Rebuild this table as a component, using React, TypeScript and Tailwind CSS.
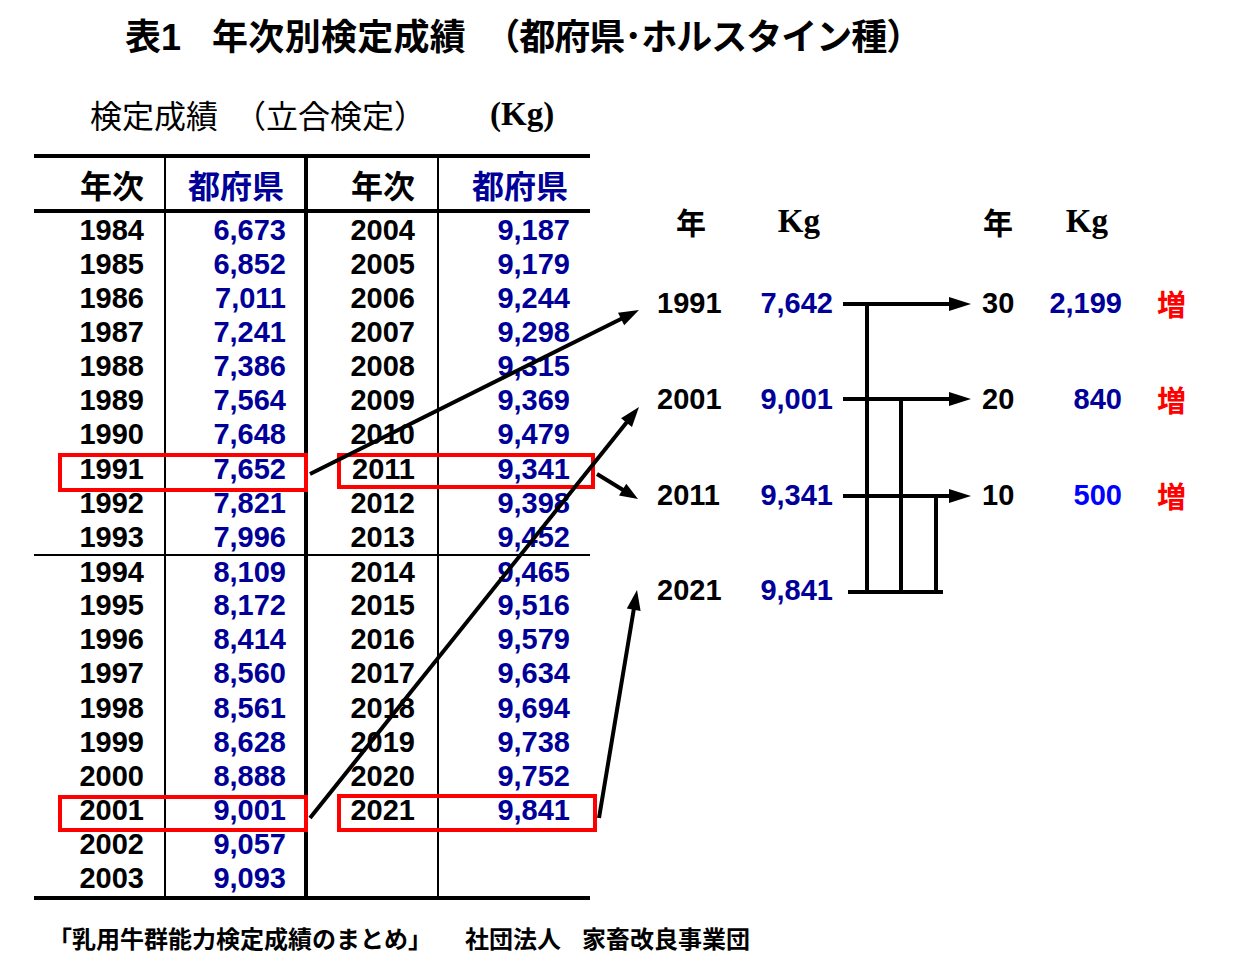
import React from "react";

const LEFT: [string, string][] = [
  ["1984", "6,673"], ["1985", "6,852"], ["1986", "7,011"], ["1987", "7,241"],
  ["1988", "7,386"], ["1989", "7,564"], ["1990", "7,648"], ["1991", "7,652"],
  ["1992", "7,821"], ["1993", "7,996"], ["1994", "8,109"], ["1995", "8,172"],
  ["1996", "8,414"], ["1997", "8,560"], ["1998", "8,561"], ["1999", "8,628"],
  ["2000", "8,888"], ["2001", "9,001"], ["2002", "9,057"], ["2003", "9,093"],
];
const RIGHT: [string, string][] = [
  ["2004", "9,187"], ["2005", "9,179"], ["2006", "9,244"], ["2007", "9,298"],
  ["2008", "9,315"], ["2009", "9,369"], ["2010", "9,479"], ["2011", "9,341"],
  ["2012", "9,398"], ["2013", "9,452"], ["2014", "9,465"], ["2015", "9,516"],
  ["2016", "9,579"], ["2017", "9,634"], ["2018", "9,694"], ["2019", "9,738"],
  ["2020", "9,752"], ["2021", "9,841"], ["", ""], ["", ""],
];

const DIAG = [
  { y: "1991", v: "7,642", d: "30", dv: "2,199", c: "text-[#000099]" },
  { y: "2001", v: "9,001", d: "20", dv: "840", c: "text-[#000099]" },
  { y: "2011", v: "9,341", d: "10", dv: "500", c: "text-[#0000ff]" },
  { y: "2021", v: "9,841", d: "", dv: "", c: "" },
];

function arrow(x1: number, y1: number, x2: number, y2: number, len = 20, hw = 7) {
  const dx = x2 - x1;
  const dy = y2 - y1;
  const L = Math.hypot(dx, dy);
  const ux = dx / L;
  const uy = dy / L;
  const bx = x2 - ux * len;
  const by = y2 - uy * len;
  const px = -uy * hw;
  const py = ux * hw;
  return (
    <g>
      <line x1={x1} y1={y1} x2={bx + ux * 2} y2={by + uy * 2} stroke="#000" strokeWidth={4} />
      <polygon points={`${x2},${y2} ${bx + px},${by + py} ${bx - px},${by - py}`} fill="#000" />
    </g>
  );
}

export default function App() {
  const num = "font-['Liberation_Sans','Noto_Sans_CJK_JP',sans-serif]";
  const jp = "font-['Noto_Sans_CJK_JP',sans-serif]";
  return (
    <div className={`relative w-[1252px] h-[969px] bg-white text-black ${num}`}>
      <h1 className={`flex pt-[16px] pl-[125px] h-[52px] text-[36px] leading-[36px] font-bold whitespace-pre ${jp}`}>
        <span>
          表<span className={num}>1</span>
        </span>
        <span className="ml-[31px] tracking-[0.3px]">年次別検定成績</span>
        <span className="ml-[18px] tracking-[-1px]">（都府県･ホルスタイン種）</span>
      </h1>

      <div className="mt-[34px] flex">
        {/* left: table */}
        <div className="ml-[34px] w-[556px]">
          <div className="flex h-[56px] items-center">
            <span className={`ml-[56px] w-[400px] flex text-[32px] leading-none font-normal ${jp}`}>
              <span>検定成績</span>
              <span className="ml-[16px]">（立合検定）</span>
            </span>
            <span className="text-[33px] leading-none font-bold font-['Liberation_Serif',serif]">(Kg)</span>
          </div>

          <div className="mt-[12px] border-t-[4px] border-b-[4px] border-black">
            <div className={`grid grid-cols-[132px_142px_131px_151px] h-[55px] border-b-[4px] border-black text-[32px] font-bold ${jp}`}>
              <div className="flex items-center justify-end pr-[20px] border-r-2 border-black">年次</div>
              <div className="flex items-center justify-end pr-[20px] border-r-[4px] border-black text-[#000099]">都府県</div>
              <div className="flex items-center justify-end pr-[22px] border-r-2 border-black">年次</div>
              <div className="flex items-center justify-end pr-[22px] text-[#000099]">都府県</div>
            </div>
            {LEFT.map((l, i) => {
              const r = RIGHT[i];
              return (
                <div
                  key={i}
                  className={`grid grid-cols-[132px_142px_131px_151px] h-[34.15px] text-[29px] font-bold leading-none ${i === 10 ? "border-t-2 border-black" : ""}`}
                >
                  <div className="flex items-center justify-end pr-[20px] border-r-2 border-black">{l[0]}</div>
                  <div className="flex items-center justify-end pr-[18px] border-r-[4px] border-black text-[#000099]">{l[1]}</div>
                  <div className="flex items-center justify-end pr-[22px] border-r-2 border-black">{r[0]}</div>
                  <div className="flex items-center justify-end pr-[20px] text-[#000099]">{r[1]}</div>
                </div>
              );
            })}
          </div>
        </div>

        {/* right: diagram */}
        <div className="ml-[50px] pt-[111px]">
          <div className="grid grid-cols-[95px_100px_145px_50px_92px_78px] h-[40px] items-center font-bold">
            <div className={`pl-[36px] text-[30px] ${jp}`}>年</div>
            <div className="text-right pr-[15px] text-[33px] font-['Liberation_Serif',serif]">Kg</div>
            <div />
            <div className={`pl-[3px] text-[30px] ${jp}`}>年</div>
            <div className="text-right pr-[14px] text-[33px] font-['Liberation_Serif',serif]">Kg</div>
            <div />
          </div>
          <div className="mt-[19px]">
            {DIAG.map((d, i) => (
              <div
                key={i}
                className="grid grid-cols-[95px_100px_145px_50px_92px_78px] h-[95.7px] items-center text-[29px] font-bold leading-none"
              >
                <div className="pl-[17px]">{d.y}</div>
                <div className="text-right pr-[2px] text-[#000099]">{d.v}</div>
                <div />
                <div className="pl-[2px]">{d.d}</div>
                <div className={`text-right ${d.c}`}>{d.dv}</div>
                <div className={`pl-[35px] text-[29px] text-[#ff0000] ${jp}`}>{d.d ? "増" : ""}</div>
              </div>
            ))}
          </div>
        </div>
      </div>

      <p className={`mt-[23px] pl-[48px] flex h-[30px] text-[24px] leading-[30px] font-bold whitespace-pre ${jp}`}>
        <span>「乳用牛群能力検定成績のまとめ」</span>
        <span className="ml-[33px]">社団法人</span>
        <span className="ml-[21px]">家畜改良事業団</span>
      </p>

      <svg className="absolute inset-0 pointer-events-none" width={1252} height={969} viewBox="0 0 1252 969">
        {/* red highlight boxes */}
        <rect x={60} y={455} width={246} height={35} fill="none" stroke="#ff0000" strokeWidth={4} />
        <rect x={339} y={455} width={254} height={32} fill="none" stroke="#ff0000" strokeWidth={4} />
        <rect x={60} y={797} width={246} height={33} fill="none" stroke="#ff0000" strokeWidth={4} />
        <rect x={339} y={796} width={256} height={34} fill="none" stroke="#ff0000" strokeWidth={4} />

        {/* arrows from table */}
        {arrow(310, 474, 639, 310)}
        {arrow(310, 818, 639, 407)}
        {arrow(597, 474, 638, 499, 18, 7)}
        {arrow(599, 818, 637, 590)}

        {/* diagram connectors */}
        {arrow(843, 304, 971, 304, 22, 7)}
        {arrow(843, 399, 971, 399, 22, 7)}
        {arrow(843, 496, 971, 496, 22, 7)}
        <line x1={848} y1={592} x2={943} y2={592} stroke="#000" strokeWidth={4} />
        <line x1={867} y1={302} x2={867} y2={594} stroke="#000" strokeWidth={4} />
        <line x1={901} y1={397} x2={901} y2={594} stroke="#000" strokeWidth={4} />
        <line x1={936} y1={494} x2={936} y2={594} stroke="#000" strokeWidth={4} />
      </svg>
    </div>
  );
}
